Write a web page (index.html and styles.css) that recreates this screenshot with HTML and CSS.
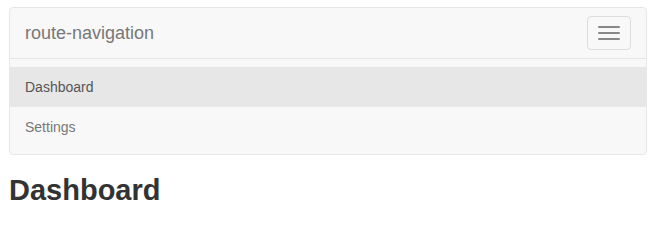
FILE: index.html
```html
<!DOCTYPE html>
<html lang="en">
<head>
    <meta charset="UTF-8">
    <meta name="viewport" content="width=device-width, initial-scale=1.0">
    <title>route-navigation</title>
    <link rel="stylesheet" href="styles.css">
</head>
<body>
    <div class="page">
        <nav class="navbar">
            <div class="navbar-header">
                <a class="navbar-brand" href="#">route-navigation</a>
                <button type="button" class="navbar-toggle" aria-label="Toggle navigation">
                    <span class="icon-bar"></span>
                    <span class="icon-bar"></span>
                    <span class="icon-bar"></span>
                </button>
            </div>
            <div class="navbar-collapse">
                <ul class="navbar-nav">
                    <li class="active"><a href="#dashboard">Dashboard</a></li>
                    <li><a href="#settings">Settings</a></li>
                </ul>
            </div>
        </nav>

        <h2 class="page-title">Dashboard</h2>
    </div>
</body>
</html>
```

FILE: styles.css
```css
* {
    margin: 0;
    padding: 0;
    box-sizing: border-box;
}

body {
    font-family: 'Liberation Sans', Arial, sans-serif;
    font-size: 14px;
    line-height: 1.42857;
    color: #333;
    background-color: #fff;
}

.page {
    padding: 7px 13px 0 9px;
}

.navbar {
    background-color: #f8f8f8;
    border: 1px solid #e7e7e7;
    border-radius: 4px;
    margin-bottom: 20px;
}

.navbar-header {
    display: flex;
    justify-content: space-between;
    align-items: flex-start;
    height: 50px;
}

.navbar-brand {
    display: block;
    padding: 15px;
    font-size: 18px;
    line-height: 20px;
    height: 50px;
    color: #777;
    text-decoration: none;
}

.navbar-toggle {
    display: flex;
    flex-direction: column;
    gap: 4px;
    margin: 8px 15px 8px 0;
    padding: 9px 10px;
    width: 44px;
    height: 34px;
    background: transparent;
    border: 1px solid #ddd;
    border-radius: 4px;
    cursor: pointer;
}

.icon-bar {
    display: block;
    width: 22px;
    height: 2px;
    border-radius: 1px;
    background-color: #888;
}

.navbar-collapse {
    border-top: 1px solid #e7e7e7;
}

.navbar-nav {
    list-style: none;
    margin: 7.5px 0;
}

.navbar-nav li a {
    display: block;
    padding: 10px 15px;
    line-height: 20px;
    color: #777;
    text-decoration: none;
}

.navbar-nav li.active a {
    background-color: #e7e7e7;
    color: #555;
}

.page-title {
    margin-top: 20px;
    font-size: 29px;
    font-weight: 700;
    line-height: 1.1;
    color: #333;
}
```
